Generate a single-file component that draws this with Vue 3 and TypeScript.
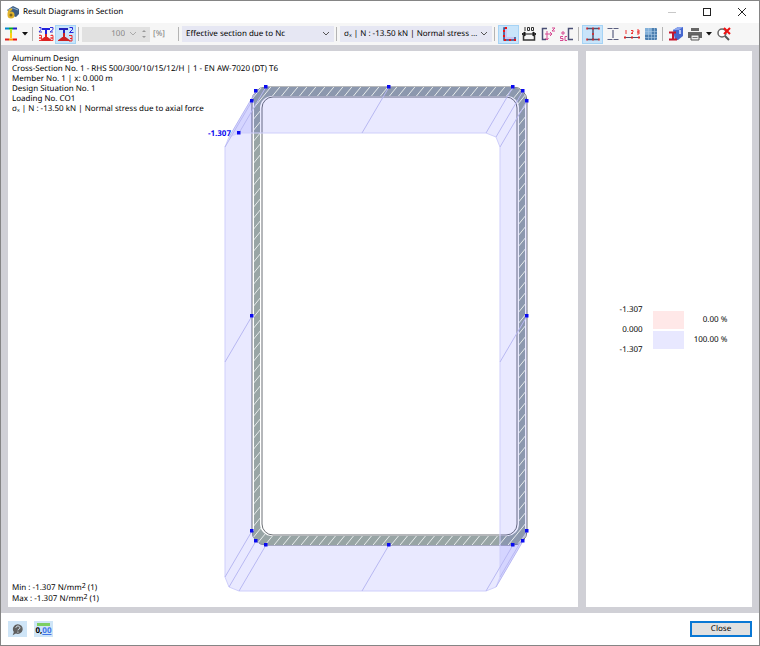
<script setup lang="ts">
import { ref } from 'vue'

interface Point {
  x: number
  y: number
}

const sectionOptions = ['Effective section due to Nc', 'Gross section']
const stressOptions = ['σₓ | N : -13.50 kN | Normal stress due to axial force', 'τ | V : 0.00 kN | Shear stress']
const sectionChoice = ref(sectionOptions[0])
const stressChoice = ref(stressOptions[0])
const scale = ref('100')

const headerLines = [
  'Aluminum Design',
  'Cross-Section No. 1 - RHS 500/300/10/15/12/H | 1 - EN AW-7020 (DT) T6',
  'Member No. 1 | x: 0.000 m',
  'Design Situation No. 1',
  'Loading No. CO1',
  'σₓ | N : -13.50 kN | Normal stress due to axial force',
]

const extremes = [
  { name: 'Min :', value: '-1.307' },
  { name: 'Max :', value: '-1.307' },
]

const legendValues = ['-1.307', '0.000', '-1.307']
const legendShares = ['0.00 %', '100.00 %']

// Outline nodes of the hollow section, clockwise from the upper left corner
const nodes: Point[] = [
  { x: 252, y: 101 },
  { x: 256, y: 91 },
  { x: 266, y: 87 },
  { x: 389, y: 87 },
  { x: 513, y: 87 },
  { x: 523, y: 91 },
  { x: 527, y: 101 },
  { x: 527, y: 316 },
  { x: 527, y: 531 },
  { x: 523, y: 541 },
  { x: 513, y: 545 },
  { x: 389, y: 545 },
  { x: 266, y: 545 },
  { x: 256, y: 541 },
  { x: 252, y: 531 },
  { x: 252, y: 316 },
]

// Stress ordinate, drawn as an oblique offset from the outline
const ordinate: Point = { x: -27, y: 46 }

const tips = nodes.map((n) => ({ x: n.x + ordinate.x, y: n.y + ordinate.y }))
const pair = (p: Point) => `${p.x},${p.y}`

const bands = nodes.map((n, i) => {
  const j = (i + 1) % nodes.length
  return [n, nodes[j], tips[j], tips[i]].map(pair).join(' ')
})
const tipOutline = tips.map(pair).join(' ')
</script>

<template>
  <main class="window">
    <header class="titlebar">
      <svg class="app-icon" viewBox="0 0 14 14" aria-hidden="true">
        <path d="M1 5 7 1l6 3v5l-3 3-3-1z" fill="#3d5d83" />
        <path d="M2 5 7 3l5 2" stroke="#8fb0cc" stroke-width="1" fill="none" />
        <path d="M6 4C3 5 2 7 3 10" stroke="#e0b32c" stroke-width="2" fill="none" />
        <circle cx="5" cy="10" r="2.5" stroke="#e0b32c" stroke-width="2" fill="#7d6620" />
      </svg>
      <h1>Result Diagrams in Section</h1>
      <div class="caption-buttons">
        <button type="button" class="min" aria-label="Minimize" disabled>
          <svg viewBox="0 0 10 10"><path d="M1 5.500h8" stroke="#c8c8c8" /></svg>
        </button>
        <button type="button" aria-label="Maximize">
          <svg viewBox="0 0 10 10"><rect x="1.500" y="1.500" width="7" height="7" fill="none" stroke="#222" /></svg>
        </button>
        <button type="button" aria-label="Close window">
          <svg viewBox="0 0 10 10"><path d="M1 1l8 8M9 1l-8 8" stroke="#222" /></svg>
        </button>
      </div>
    </header>

    <div class="toolbar" role="toolbar" aria-label="Diagram tools">
      <button type="button" class="tool" aria-label="Result colors">
        <svg viewBox="0 0 16 16">
          <path d="M2 2.500h4" stroke="#08c" stroke-width="2" /><path d="M6 2.500h4" stroke="#0a3" stroke-width="2" />
          <path d="M10 2.500h4" stroke="#22c" stroke-width="2" />
          <path d="M8 3v4" stroke="#bd2" stroke-width="2" /><path d="M8 7v5" stroke="#fc1" stroke-width="2" />
          <path d="M2 13.500h4" stroke="#d22" stroke-width="2" /><path d="M6 13.500h4" stroke="#f90" stroke-width="2" />
          <path d="M10 13.500h4" stroke="#e11" stroke-width="2" />
        </svg>
      </button>
      <button type="button" class="caret" aria-label="More result colors">
        <svg viewBox="0 0 6 4"><path d="M0 0h6L3 3.500z" fill="#111" /></svg>
      </button>
      <span class="sep"></span>
      <button type="button" class="tool" aria-label="All values">
        <svg viewBox="0 0 16 16">
          <path d="M4 3h8M8 3v5" stroke="#22d" stroke-width="2" />
          <path d="M8 8v3L4 14h8L8 11" stroke="#d22" stroke-width="2" fill="#d22" />
          <path d="M1 1.500h2v2L1 6h3M12 1.500h3v2L12 6h3" stroke="#33d" fill="none" />
          <path d="M1 9.500h2.500v2.500H1h2.500v2.500H1M12.500 9.500H15v2.500h-2.500H15v2.500h-2.500" stroke="#e33" fill="none" />
          <path d="M2 6v3M14 6v3" stroke="#b9a" stroke-dasharray="1 1" />
        </svg>
      </button>
      <button type="button" class="tool on" aria-label="Extreme values" aria-pressed="true">
        <svg viewBox="0 0 16 16">
          <path d="M1 3h9M6 3v5" stroke="#22b" stroke-width="2" />
          <path d="M6 7v4L2 14h8L6 11" stroke="#c22" stroke-width="2" fill="#c22" />
          <path d="M11.500 1.500h3v2l-3 3h4" stroke="#22d" fill="none" />
          <path d="M11 9.500h3v3h-2 2v2.500h-3" stroke="#e22" fill="none" />
        </svg>
      </button>
      <span class="sep"></span>
      <div class="spin">
        <input v-model="scale" type="text" aria-label="Diagram scale in percent" disabled />
        <svg class="chevron" viewBox="0 0 8 8"><path d="M1 2l3 3 3-3" fill="none" stroke="#aaa" /></svg>
        <svg class="steps" viewBox="0 0 6 12"><path d="M1 4l2-2 2 2zM1 8l2 2 2-2z" fill="#999" /></svg>
      </div>
      <span class="unit">[%]</span>
      <span class="sep"></span>
      <div class="combo">
        <select v-model="sectionChoice" aria-label="Section type">
          <option v-for="o in sectionOptions" :key="o">{{ o }}</option>
        </select>
        <svg class="chevron" viewBox="0 0 8 8"><path d="M1 2l3 3 3-3" fill="none" stroke="#555" /></svg>
      </div>
      <span class="sep"></span>
      <div class="combo">
        <select v-model="stressChoice" aria-label="Stress component">
          <option v-for="o in stressOptions" :key="o">{{ o }}</option>
        </select>
        <svg class="chevron" viewBox="0 0 8 8"><path d="M1 2l3 3 3-3" fill="none" stroke="#555" /></svg>
      </div>
      <span class="sep"></span>
      <button type="button" class="tool on" aria-label="Stress points" aria-pressed="true">
        <svg viewBox="0 0 16 16">
          <path d="M3 2h3v9h8v3H3z" fill="#c9c4f2" />
          <path d="M6 2H3v12h11v-3" fill="none" stroke="#334a86" stroke-width="1.500" />
          <path d="M6 2H3v12h11v-3" fill="none" stroke="#e11" stroke-width="2" stroke-dasharray="2 3" />
        </svg>
      </button>
      <button type="button" class="tool" aria-label="Dimensions">
        <svg viewBox="0 0 16 16">
          <path d="M4 1v4M6.500 1.500h2v3h-2zM10.500 1.500h2v3h-2z" stroke="#333" fill="none" />
          <path d="M2 8h12M4 6L1 8l3 2zM12 6l3 2-3 2z" stroke="#111" stroke-width="1" fill="#111" />
          <path d="M2.500 7v7h11V7" stroke="#333" stroke-width="1.500" fill="none" />
        </svg>
      </button>
      <button type="button" class="tool" aria-label="Principal axes">
        <svg viewBox="0 0 16 16">
          <path d="M7 2.500H2.500v11H6" fill="none" stroke="#4a4f75" stroke-width="1.500" />
          <path d="M5 8h7M10 6l2 2-2 2M7 5v9M5.500 12L7 14l1.500-2M12 2h3l-3 3h3" fill="none" stroke="#d64b93" />
        </svg>
      </button>
      <button type="button" class="tool" aria-label="Shear center">
        <svg viewBox="0 0 16 16">
          <path d="M14 2.500H9.500v11H14" fill="none" stroke="#4a4f75" stroke-width="1.500" />
          <path d="M4 5v4M2 7h4M4 10.500H1.500v2H4v2H1M8 10.500H6v4h2" fill="none" stroke="#d64b93" />
        </svg>
      </button>
      <span class="sep"></span>
      <button type="button" class="tool on" aria-label="Section outline" aria-pressed="true">
        <svg viewBox="0 0 16 16">
          <path d="M2 2.500h12M8 3v10M2 13.500h12" stroke="#4d5372" stroke-width="1.500" />
          <path d="M2 1.500v2M8 1.500v2M14 1.500v2M8 7v2M2 12.500v2M8 12.500v2M14 12.500v2" stroke="#d22" stroke-width="1.500" />
        </svg>
      </button>
      <button type="button" class="tool" aria-label="Section parts">
        <svg viewBox="0 0 16 16">
          <path d="M2.500 2.500h5M8.500 2.500h5M8 4v8M2.500 13.500h5M8.500 13.500h5" stroke="#5a5f80" stroke-width="1.200" />
        </svg>
      </button>
      <button type="button" class="tool" aria-label="Numbering">
        <svg viewBox="0 0 16 16">
          <path d="M2 4v4M7 4.500h2v1.500L7 7.500h2M13 4h2v2h-2h2v2h-2" stroke="#e33" fill="none" />
          <path d="M1 11.500h14" stroke="#4d5372" />
          <path d="M1 10.500v2M8 10.500v2M15 10.500v2" stroke="#d22" stroke-width="2" />
        </svg>
      </button>
      <button type="button" class="tool" aria-label="Table">
        <svg viewBox="0 0 16 16">
          <rect x="2" y="2" width="12" height="12" rx="1" fill="#4c7fb0" />
          <path d="M2 2h6v6H2z" fill="#83b1da" />
          <path d="M5.500 2v12M8.500 2v12M11.500 2v12M2 5.500h12M2 8.500h12M2 11.500h12" stroke="#a9c9e6" stroke-width=".6" />
        </svg>
      </button>
      <span class="sep"></span>
      <button type="button" class="tool" aria-label="Section information">
        <svg viewBox="0 0 16 16">
          <path d="M5 4l5-3h5v9l-5 4H7z" fill="#4668cf" />
          <path d="M5 4l5-3h5l-4 3z" fill="#8ba5ee" />
          <path d="M12 4v4" stroke="#dfe6ff" stroke-width="1.500" />
          <path d="M1 6.500h7M5 7v6M1 13.500h8" stroke="#c4152c" stroke-width="2" />
        </svg>
      </button>
      <button type="button" class="tool" aria-label="Print">
        <svg viewBox="0 0 16 16">
          <path d="M4 2h8v3H4z" fill="#666" />
          <path d="M1 6h14v6H1z" fill="#666" />
          <path d="M4 9h8v5H4z" fill="#eee" stroke="#555" />
          <path d="M5.500 11.500h5" stroke="#777" />
        </svg>
      </button>
      <button type="button" class="caret" aria-label="Print options">
        <svg viewBox="0 0 6 4"><path d="M0 0h6L3 3.500z" fill="#111" /></svg>
      </button>
      <button type="button" class="tool" aria-label="Clear search">
        <svg viewBox="0 0 16 16">
          <circle cx="6" cy="7" r="4" fill="#fff" stroke="#666" stroke-width="1.500" />
          <path d="M9 10l4 4" stroke="#555" stroke-width="2" />
          <path d="M8 2l6 6M14 2L8 8" stroke="#e11" stroke-width="2" />
        </svg>
      </button>
    </div>

    <div class="workspace">
      <section class="pane canvas" aria-label="Section diagram">
        <svg class="diagram" viewBox="8 51 570 556">
          <defs>
            <pattern id="hatch" width="9" height="11" patternUnits="userSpaceOnUse">
              <path d="M0 11 9 0M-1 1.222 1-1.222M8 12.222l2-2.444" stroke="#e6eaea" />
            </pattern>
          </defs>

          <path class="gross" fill-rule="evenodd" d="M266 87H513A14 14 0 0 1 527 101V531A14 14 0 0 1 513 545H266A14 14 0 0 1 252 531V101A14 14 0 0 1 266 87Z
            M273 97A11 11 0 0 0 262 108V524A11 11 0 0 0 273 535H506A11 11 0 0 0 517 524V108A11 11 0 0 0 506 97Z" />
          <g class="effective">
            <path id="effective-area" fill-rule="evenodd" d="M266 87H513A14 14 0 0 1 526 101H525V531H526A14 14 0 0 1 513 545H266A14 14 0 0 1 252 531H254V101H252A14 14 0 0 1 266 87Z
              M272 96A12 12 0 0 0 260 108V524A12 12 0 0 0 272 536H507A12 12 0 0 0 519 524V108A12 12 0 0 0 507 96Z" />
          </g>

          <polygon v-for="(b, i) in bands" :key="i" class="band" :points="b" />
          <use href="#effective-area" fill="url(#hatch)" />
          <polygon class="tip" :points="tipOutline" />
          <line v-for="(n, i) in nodes" :key="i" class="ray" :x1="n.x" :y1="n.y" :x2="tips[i].x" :y2="tips[i].y" />

          <rect v-for="(n, i) in nodes" :key="i" class="node" :x="n.x - 2" :y="n.y - 2" width="3.500" height="3.500" />
          <rect class="node" x="237" y="131" width="3.500" height="3.500" />
          <text class="value" x="231" y="136" text-anchor="end">-1.307</text>
        </svg>
        <div class="notes">
          <p v-for="line in headerLines" :key="line">{{ line }}</p>
        </div>
        <div class="notes extremes">
          <p v-for="e in extremes" :key="e.name">{{ e.name }} {{ e.value }} N/mm<sup>2</sup> (1)</p>
        </div>
      </section>

      <aside class="pane legend" aria-label="Color legend">
        <div class="column">
          <span v-for="(v, i) in legendValues" :key="i">{{ v }}</span>
        </div>
        <div class="swatches">
          <span class="swatch positive"></span>
          <span class="swatch negative"></span>
        </div>
        <div class="column shares">
          <span v-for="s in legendShares" :key="s">{{ s }}</span>
        </div>
      </aside>
    </div>

    <footer class="footer">
      <button type="button" class="foot-tool" aria-label="Help">
        <svg viewBox="0 0 16 16">
          <path d="M8 1.500a6 6 0 1 1-2 11.500L2 15l1.500-4A6 6 0 0 1 8 1.500z" fill="#606060" />
          <path d="M6 6c0-3 5-3 5 0 0 1.500-2.500 1.500-2.500 3M8.500 10.500v1.500" stroke="#d9e8f5" stroke-width="1.200" fill="none" />
        </svg>
      </button>
      <button type="button" class="foot-tool decimals" aria-label="Decimal places">
        <span class="bar"></span>
        <span class="digits">0,<u>00</u></span>
      </button>
      <button type="button" class="close">Close</button>
    </footer>
  </main>
</template>

<style>
body {
  margin: 0;
}
</style>

<style scoped>
* {
  box-sizing: border-box;
}

.window {
  display: flex;
  flex-direction: column;
  min-height: 100vh;
  border: 1px solid #858585;
  background: #fff;
  color: #000;
  font: 8px/10px 'Noto Sans', 'Open Sans', sans-serif;
  text-rendering: geometricPrecision;
}

button,
input,
select {
  margin: 0;
  padding: 0;
  border: 0;
  background: none;
  color: inherit;
  font: inherit;
  text-rendering: inherit;
}

svg {
  display: block;
}

.titlebar {
  display: flex;
  align-items: center;
  height: 22px;
  padding-left: 5px;
}

.app-icon {
  width: 14px;
  height: 14px;
}

h1 {
  flex: 1;
  margin: 0 0 0 3px;
  font-size: 8px;
  font-weight: 400;
}

.caption-buttons {
  display: flex;
}

.caption-buttons button {
  display: grid;
  place-items: center;
  width: 35px;
  height: 22px;
}

.caption-buttons svg {
  width: 10px;
  height: 10px;
}

.toolbar {
  display: flex;
  align-items: center;
  height: 22px;
  background: #f6f6f6;
}

.tool,
.caret {
  display: grid;
  flex: none;
  place-items: center;
  width: 19px;
  height: 19px;
}

.tool svg {
  width: 16px;
  height: 16px;
}

.tool.on {
  width: 21px;
  border: 1px solid #a5d3f5;
  background: #c8e4fa;
}

.caret {
  width: 10px;
}

.caret svg {
  width: 6px;
  height: 4px;
}

.sep {
  flex: none;
  width: 2px;
  height: 14px;
  margin: 0 2px;
  border-left: 1px solid #b4b4b4;
}

.spin {
  display: flex;
  flex: none;
  align-items: center;
  gap: 4px;
  width: 68px;
  height: 15px;
  padding-right: 3px;
  background: #e1e1e1;
}

.spin input {
  flex: 1;
  width: 0;
  color: #858585;
  text-align: right;
}

.chevron {
  width: 8px;
  height: 8px;
}

.steps {
  width: 6px;
  height: 12px;
}

.unit {
  width: 26px;
  padding-left: 3px;
  color: #777;
}

.combo {
  display: grid;
  grid-template-columns: minmax(0, 1fr) 12px;
  flex: none;
  align-items: center;
  width: 152px;
  height: 16px;
  background: #e6e7f3;
}

.combo select {
  grid-area: 1 / 1 / 2 / 2;
  padding-left: 4px;
  height: 16px;
  overflow: hidden;
  appearance: none;
  text-overflow: ellipsis;
  white-space: nowrap;
}

.workspace {
  display: grid;
  flex: 1;
  grid-template-columns: minmax(0, 570fr) minmax(0, 166fr);
  gap: 8px;
  padding: 6px 7px;
  background: #d0d0d6;
}

.pane {
  background: #fff;
}

.canvas {
  display: grid;
}

.canvas > * {
  grid-area: 1 / 1;
}

.diagram {
  width: 100%;
  height: 100%;
}

.notes {
  padding: 3px 4px;
}

.notes p {
  margin: 0;
}

.extremes {
  align-self: end;
}

.extremes p {
  line-height: 11px;
}

.extremes sup {
  font-size: 7px;
  line-height: 0;
  vertical-align: 2px;
}

.gross {
  fill: #fff;
  stroke: #6d7176;
  stroke-width: 1;
}

.effective {
  fill: #98a5a5;
}

.band {
  fill: rgb(40 40 255 / 10%);
}

.tip {
  fill: none;
  stroke: #cfcffb;
}

.ray {
  stroke: #b8b8f2;
}

.node {
  fill: #0a0af0;
}

.value {
  fill: #0a0af0;
  font-weight: 700;
}

.legend {
  display: flex;
  align-items: center;
  justify-content: center;
  gap: 10px;
  padding: 2px 0 0 9px;
}

.column {
  display: grid;
  grid-auto-rows: 20px;
  align-items: center;
  text-align: right;
}

.swatches {
  display: grid;
  gap: 2px;
}

.swatch {
  width: 31px;
  height: 18px;
}

.positive {
  background: #ffe8e8;
}

.negative {
  background: #e8e8ff;
}

.footer {
  display: flex;
  align-items: center;
  gap: 7px;
  height: 32px;
  padding: 0 7px;
}

.foot-tool {
  display: grid;
  place-items: center;
  align-content: center;
  width: 19px;
  height: 16px;
  background: #cfe5f7;
}

.foot-tool svg {
  width: 13px;
  height: 13px;
}

.bar {
  width: 13px;
  height: 3px;
  background: #7ccf62;
}

.digits {
  font-size: 8px;
  font-weight: 700;
}

.digits u {
  color: #4275e8;
}

.close {
  width: 62px;
  height: 16px;
  margin-left: auto;
  border: 2px solid #0a78d4;
  background: #e1e1e1;
}
</style>
